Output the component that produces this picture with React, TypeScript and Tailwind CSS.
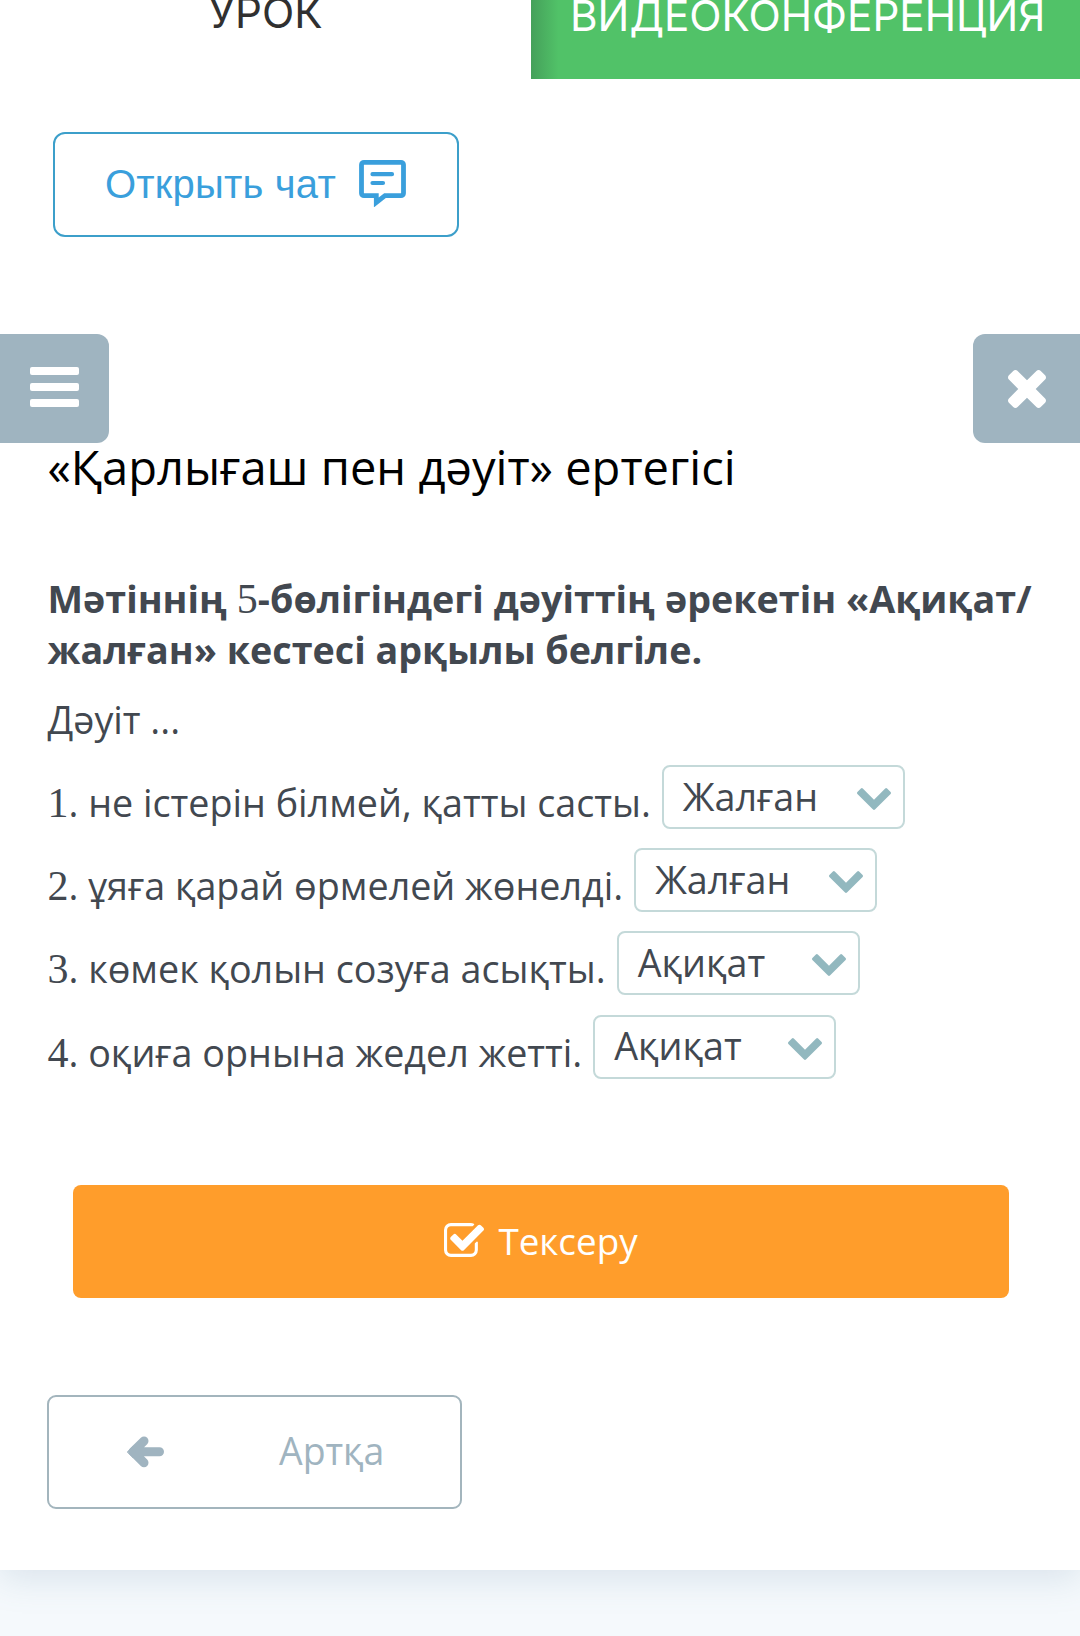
import { useState } from "react";

const QUESTIONS = [
  { text: "не істерін білмей, қатты састы.", answer: "Жалған" },
  { text: "ұяға қарай өрмелей жөнелді.", answer: "Жалған" },
  { text: "көмек қолын созуға асықты.", answer: "Ақиқат" },
  { text: "оқиға орнына жедел жетті.", answer: "Ақиқат" },
];

function ChatIcon() {
  return (
    <svg viewBox="0 0 48 48" className="-mt-[3px] h-12 w-12 shrink-0" fill="none" stroke="currentColor" strokeWidth="4.8">
      <path d="M6 3.3h37a2.500 2.500 0 0 1 2.500 2.500v28.400a2.500 2.500 0 0 1-2.500 2.500H27L18.300 43.500v-6.800H6a2.500 2.500 0 0 1-2.500-2.500V5.800A2.500 2.500 0 0 1 6 3.300z" />
      <path d="M14.500 15.200H34M14.500 24h10.500" strokeWidth="4.2" strokeLinecap="round" />
    </svg>
  );
}

function CloseIcon() {
  return (
    <svg viewBox="302 366 1188 1188" className="ml-px h-[38px] w-[38px]" fill="currentColor">
      <path d="M1490 1322q0 40-28 68l-136 136q-28 28-68 28t-68-28l-294-294-294 294q-28 28-68 28t-68-28l-136-136q-28-28-28-68t28-68l294-294-294-294q-28-28-28-68t28-68l136-136q28-28 68-28t68 28l294 294 294-294q28-28 68-28t68 28l136 136q28 28 28 68t-28 68l-294 294 294 294q28 28 28 68z" />
    </svg>
  );
}

function ChevronIcon() {
  return (
    <svg viewBox="90 533 1612 1035" className="mt-1 h-[22px] w-[34px] text-[#92b8bf]" fill="currentColor">
      <path d="M1683 808l-742 741q-19 19-45 19t-45-19l-742-741q-19-19-19-45.5t19-45.5l166-165q19-19 45-19t45 19l531 531 531-531q19-19 45-19t45 19l166 165q19 19 19 45.5t-19 45.5z" />
    </svg>
  );
}

function CheckIcon() {
  return (
    <svg viewBox="64 128 1663 1408" className="-mt-[3px] h-[34px] w-10" fill="currentColor">
      <path d="M1472 930v318q0 119-84.5 203.5t-203.5 84.5h-832q-119 0-203.5-84.5t-84.5-203.5v-832q0-119 84.5-203.5t203.5-84.5h832q63 0 117 25 15 7 18 23 3 17-9 29l-49 49q-10 10-23 10-3 0-9-2-23-6-45-6h-832q-66 0-113 47t-47 113v832q0 66 47 113t113 47h832q66 0 113-47t47-113v-254q0-13 9-22l64-64q10-10 23-10 6 0 12 3 20 8 20 29zm231-489l-814 814q-24 24-57 24t-57-24l-430-430q-24-24-24-57t24-57l110-110q24-24 57-24t57 24l263 263 647-647q24-24 57-24t57 24l110 110q24 24 24 57t-24 57z" />
    </svg>
  );
}

function ArrowIcon() {
  return (
    <svg viewBox="0 0 37 32" className="h-8 w-[37px]" fill="none" stroke="currentColor" strokeWidth="9" strokeLinecap="round" strokeLinejoin="round">
      <path d="M17 5 6 15.800 17 26.800M8 15.800h24.500" />
      <path d="M.5 15.800 6 10.500v10.600z" fill="currentColor" strokeWidth="1" />
      <path d="M8 15.800 15 9v13.600z" fill="currentColor" strokeWidth="1" />
    </svg>
  );
}

function Answer({ value }: { value: string }) {
  return (
    <button
      type="button"
      className="flex h-16 w-[243px] items-center justify-between rounded-[8px] border-2 border-[#c4d9d9] pl-[19px] pr-3"
    >
      <span className="-mt-px leading-[56px]">{value}</span>
      <ChevronIcon />
    </button>
  );
}

export default function App() {
  const [tab, setTab] = useState("lesson");

  return (
    <div className="h-[1636px] w-[1080px] overflow-hidden bg-[#f5f9fc] font-['Open_Sans','Noto_Sans',sans-serif] text-[37.7px] text-[#424850]">
      <main className="h-[1570px] bg-white shadow-[0_8px_34px_rgba(90,130,160,0.18)]">
        <nav className="flex h-[79px] overflow-hidden font-[Inter,sans-serif] text-[42.2px] leading-[40px] font-[370]">
          <button
            type="button"
            aria-selected={tab === "lesson"}
            onClick={() => setTab("lesson")}
            className="flex h-full w-[531px] items-start justify-center text-[#303030]"
          >
            <span className="-mt-[7px]">УРОК</span>
          </button>
          <button
            type="button"
            aria-selected={tab === "video"}
            onClick={() => setTab("video")}
            className="flex h-full flex-1 items-start bg-[#51c268] bg-linear-to-r from-[#45a05a] to-[#51c268] to-[5%] pl-[39px] whitespace-nowrap text-white"
          >
            <span className="-mt-1">ВИДЕОКОНФЕРЕНЦИЯ</span>
          </button>
        </nav>

        <button
          type="button"
          className="mt-[53px] ml-[53px] flex h-[105px] w-[406px] items-center rounded-xl border-2 border-[#3c9fca] pl-[50px] font-['Liberation_Sans',sans-serif] text-[40px] tracking-[0.2px] text-[#3a9fdc]"
        >
          <span className="-mt-px w-[253px] text-left leading-[56px] whitespace-nowrap">Открыть чат</span>
          <ChatIcon />
        </button>

        <div className="mt-[97px] flex justify-between text-white">
          <button type="button" aria-label="Мәзір" className="flex h-[109px] w-[109px] flex-col items-start gap-2 rounded-r-xl bg-[#9fb4c0] pt-[33px] pl-[30px]">
            <span className="h-2 w-[49px] rounded-[2px] bg-white" />
            <span className="h-2 w-[49px] rounded-[2px] bg-white" />
            <span className="h-2 w-[49px] rounded-[2px] bg-white" />
          </button>
          <button type="button" aria-label="Жабу" className="flex h-[109px] w-[107px] items-center justify-center rounded-l-xl bg-[#9fb4c0]">
            <CloseIcon />
          </button>
        </div>

        <section className="pl-[47.5px]">
          <h1 className="-mt-2 text-[47.1px] leading-[64px] text-black">«Қарлығаш пен дәуіт» ертегісі</h1>

          <p className="mt-[74px] leading-[51px] font-bold whitespace-nowrap">
            Мәтіннің <span className="font-['Liberation_Serif',serif] text-[42px] leading-none font-normal">5</span>
            -бөлігіндегі дәуіттің әрекетін «Ақиқат/
            <br />
            жалған» кестесі арқылы белгіле.
          </p>
          <p className="mt-[19px] leading-[51px]">Дәуіт ...</p>

          <ol className="mt-5 flex flex-col gap-[19.2px]">
            {QUESTIONS.map((q, i) => (
              <li key={q.text} className="flex h-16 items-center gap-[11px]">
                <span className="mt-[12px] leading-[56px] whitespace-nowrap">
                  <span className="font-['Liberation_Serif',serif] text-[42px] leading-none">{i + 1}</span>. {q.text}
                </span>
                <Answer value={q.answer} />
              </li>
            ))}
          </ol>
        </section>

        <button
          type="button"
          className="mt-[106.4px] ml-[73px] flex h-[113px] w-[936px] items-center justify-center gap-[14px] rounded-[8px] bg-[#ff9d2b] text-[36.8px] text-white"
        >
          <CheckIcon />
          <span>Тексеру</span>
        </button>

        <button
          type="button"
          className="mt-[97px] ml-[47px] flex h-[114px] w-[415px] items-center rounded-[9px] border-2 border-[#a3b5bd] pl-[78px] text-[37.4px] text-[#a0b4c0]"
        >
          <ArrowIcon />
          <span className="-mt-0.5 ml-[115px]">Артқа</span>
        </button>
      </main>
    </div>
  );
}
